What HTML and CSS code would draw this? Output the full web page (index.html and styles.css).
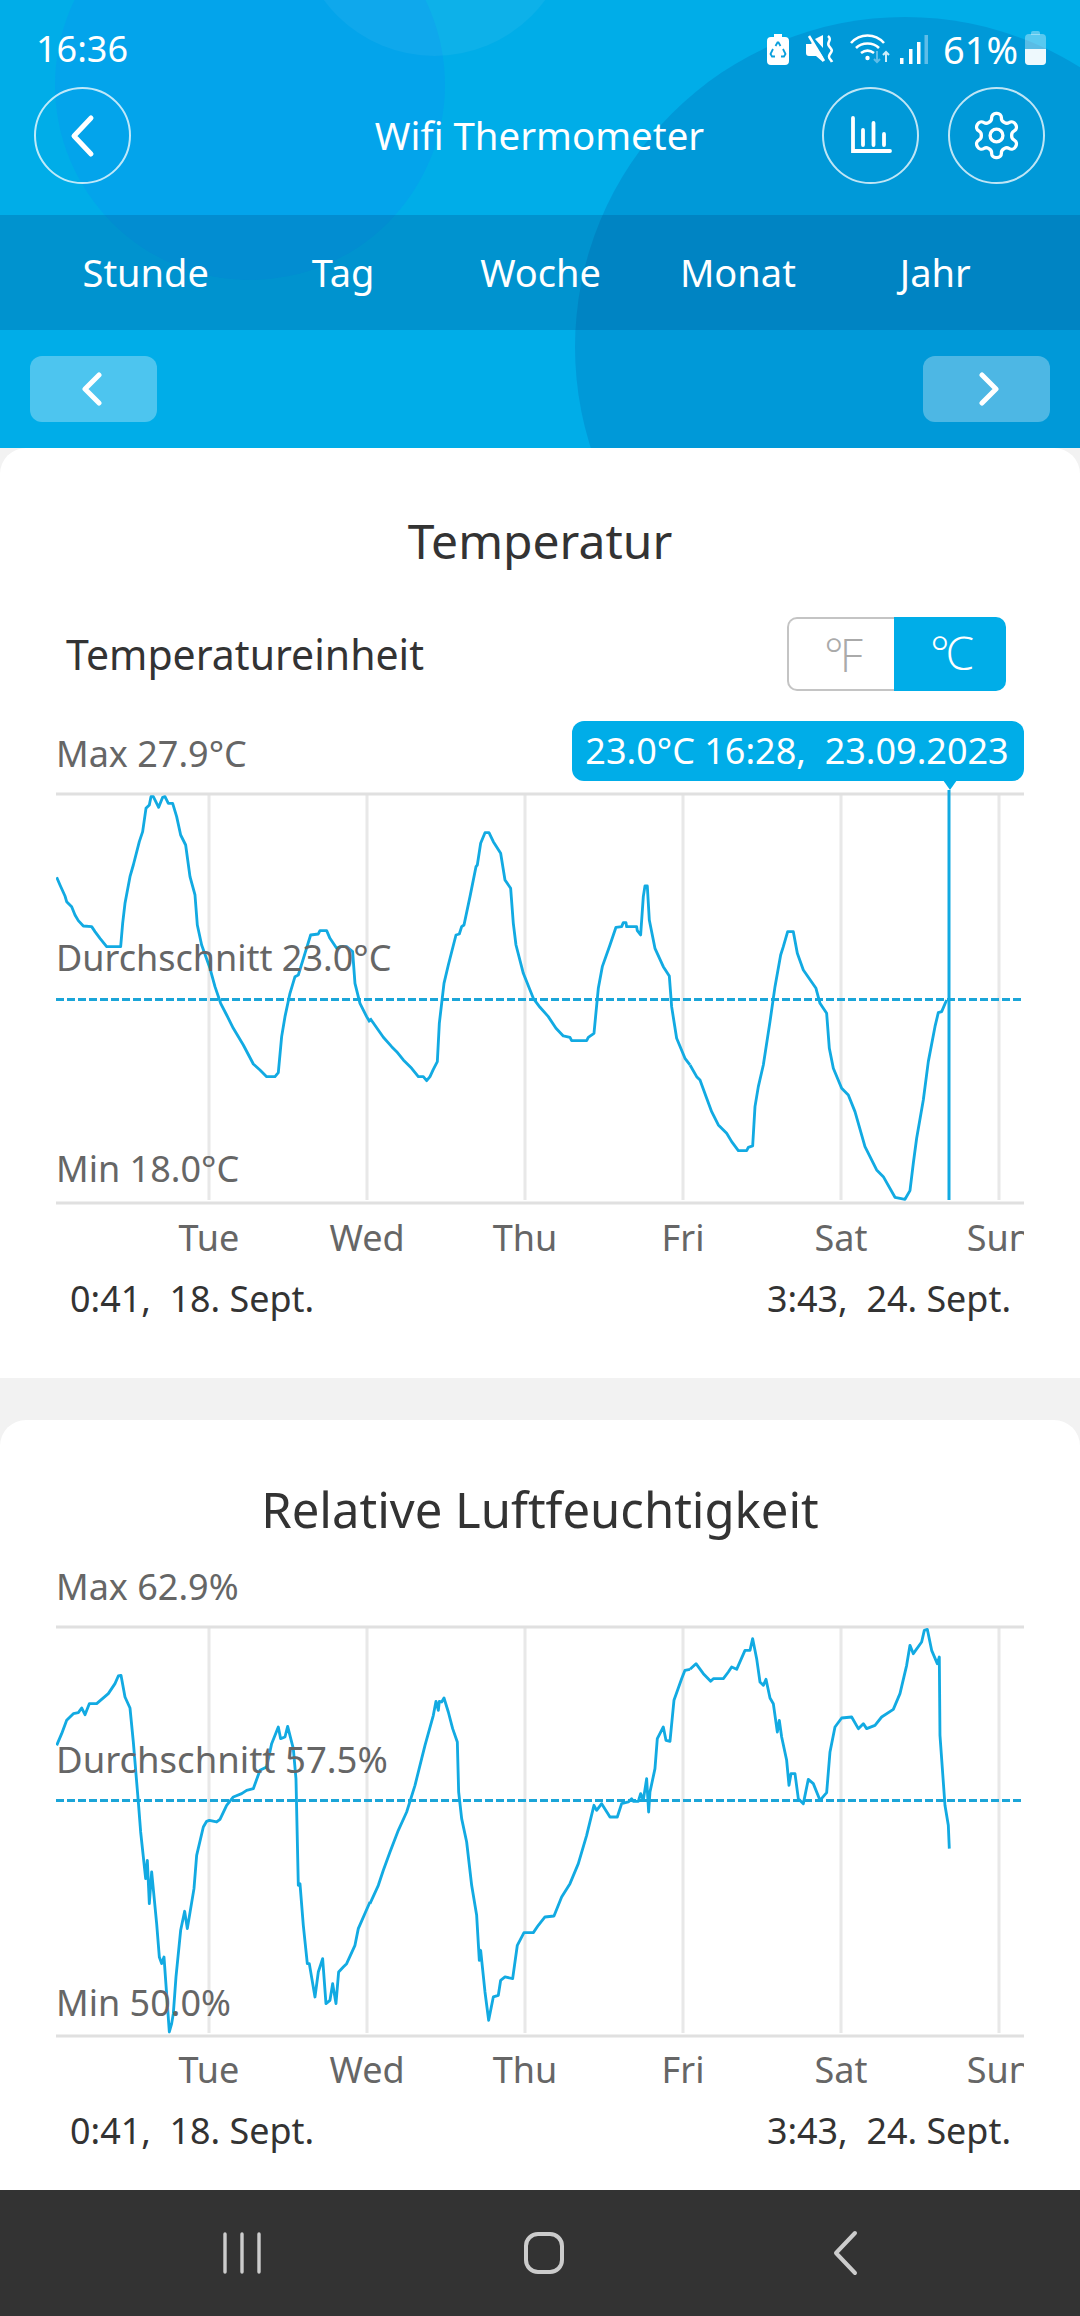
FILE: index.html
```html
<!DOCTYPE html>
<html lang="de">
<head>
    <meta charset="UTF-8">
    <meta name="viewport" content="width=device-width, initial-scale=1.0">
    <title>Wifi Thermometer</title>
    <link rel="stylesheet" href="styles.css">
</head>
<body>
<div class="top">
    <div class="blob blob-left"></div>
    <div class="blob blob-small"></div>
    <div class="blob blob-right"></div>

    <div class="status">
        <span class="time">16:36</span>
        <div class="status-icons">
            <svg class="ic-saver" width="22" height="31" viewBox="0 0 22 31">
                <path d="M7 0h8v3h3a4 4 0 0 1 4 4v20a4 4 0 0 1-4 4H4a4 4 0 0 1-4-4V7a4 4 0 0 1 4-4h3z" fill="#fff"/>
                <path d="M8.500 12l2-3.500h1l2 3.500M16 15l2.500 5-1.500 2.500h-3M8 22.500H5L3.500 20 6 15" fill="none" stroke="#0a9fdc" stroke-width="1.8"/>
            </svg>
            <svg class="ic-mute" width="29" height="28" viewBox="0 0 29 28">
                <path d="M0 9h5l2-2 10 15v5l-7-6H3a3 3 0 0 1-3-3zM9 4l8-4v13z" fill="#fff"/>
                <path d="M3 1l15 25" stroke="#fff" stroke-width="2.5"/>
                <path d="M22 1c5 4-2 6 1 10s4 4 1 8 1 5 2 8" fill="none" stroke="#fff" stroke-width="2.6"/>
            </svg>
            <svg class="ic-wifi" width="40" height="30" viewBox="0 0 40 30">
                <path d="M1 9c9-10 24-10 33 0M6 14c6-6 17-6 23 0M11 19c4-3 9-3 13 0" fill="none" stroke="#fff" stroke-width="2.6"/>
                <circle cx="17.500" cy="24" r="2.2" fill="#fff"/>
                <path d="M27 17v11M24 25l3 3 3-3" fill="none" stroke="#5fbde8" stroke-width="2"/>
                <path d="M36 28V18M33 21l3-3 3 3" fill="none" stroke="#cfeefa" stroke-width="2"/>
            </svg>
            <svg class="ic-signal" width="28" height="29" viewBox="0 0 28 29">
                <rect x="0" y="23" width="3.500" height="6" fill="#fff"/>
                <rect x="9" y="14" width="3.500" height="15" fill="#fff"/>
                <rect x="17" y="7" width="3.500" height="22" fill="#fff"/>
                <rect x="24.500" y="0" width="3.500" height="29" fill="#5fbde8"/>
            </svg>
            <span class="battery-text">61%</span>
            <div class="battery"><div class="battery-fill"></div></div>
        </div>
    </div>

    <div class="appbar">
        <div class="round-btn">
            <svg width="30" height="44" viewBox="0 0 30 44"><path d="M23 4L6 22l17 18" fill="none" stroke="#fff" stroke-width="5" stroke-linecap="round" stroke-linejoin="round"/></svg>
        </div>
        <div class="app-title">Wifi Thermometer</div>
        <div class="app-actions">
            <div class="round-btn">
                <svg width="42" height="40" viewBox="0 0 42 40">
                    <path d="M3 2v33h37M13 14v15M23.500 7v22M34 18v11" fill="none" stroke="#fff" stroke-width="3.800" stroke-linecap="round"/>
                </svg>
            </div>
            <div class="round-btn">
                <svg width="53" height="53" viewBox="0 0 24 24" fill="none" stroke="#fff" stroke-width="1.5" stroke-linejoin="round">
                    <path d="M12.220 2h-.44a2 2 0 0 0-2 2v.18a2 2 0 0 1-1 1.730l-.43.25a2 2 0 0 1-2 0l-.15-.08a2 2 0 0 0-2.730.73l-.22.38a2 2 0 0 0 .73 2.730l.15.1a2 2 0 0 1 1 1.720v.51a2 2 0 0 1-1 1.740l-.15.09a2 2 0 0 0-.73 2.730l.22.38a2 2 0 0 0 2.730.73l.15-.08a2 2 0 0 1 2 0l.43.25a2 2 0 0 1 1 1.730V20a2 2 0 0 0 2 2h.44a2 2 0 0 0 2-2v-.18a2 2 0 0 1 1-1.730l.43-.25a2 2 0 0 1 2 0l.15.08a2 2 0 0 0 2.730-.73l.22-.39a2 2 0 0 0-.73-2.730l-.15-.08a2 2 0 0 1-1-1.740v-.5a2 2 0 0 1 1-1.740l.15-.09a2 2 0 0 0 .73-2.730l-.22-.38a2 2 0 0 0-2.730-.73l-.15.08a2 2 0 0 1-2 0l-.43-.25a2 2 0 0 1-1-1.730V4a2 2 0 0 0-2-2z"/>
                    <circle cx="12" cy="12" r="2.900"/>
                </svg>
            </div>
        </div>
    </div>

    <div class="tabs">
        <span>Stunde</span>
        <span>Tag</span>
        <span>Woche</span>
        <span>Monat</span>
        <span>Jahr</span>
    </div>

    <div class="pager">
        <div class="page-btn">
            <svg width="24" height="34" viewBox="0 0 24 34"><path d="M17 3L3 17l14 14" fill="none" stroke="#fff" stroke-width="5" stroke-linecap="round" stroke-linejoin="round"/></svg>
        </div>
        <div class="page-btn">
            <svg width="24" height="34" viewBox="0 0 24 34"><path d="M7 3l14 14L7 31" fill="none" stroke="#fff" stroke-width="5" stroke-linecap="round" stroke-linejoin="round"/></svg>
        </div>
    </div>
</div>

<div class="card card-temp">
    <h2 class="card-title">Temperatur</h2>
    <div class="unit-row">
        <span class="unit-label">Temperatureinheit</span>
        <div class="unit-toggle">
            <span class="unit-off">°F</span>
            <span class="unit-on">°C</span>
        </div>
    </div>
    <div class="chart">
        <div class="chart-head">
            <span class="value-label">Max 27.9°C</span>
            <div class="tooltip">23.0°C 16:28,&nbsp; 23.09.2023</div>
        </div>
        <div class="plot">
            <svg class="plot-svg" width="968" height="416" viewBox="0 0 968 416">
                <g class="grid">
                    <path d="M153 5v405M311 5v405M469 5v405M627 5v405M785 5v405M943 5v405"/>
                </g>
                <path class="axis" d="M0 4h968M0 413h968"/>
                <path class="avg" d="M0 209.500h966"/>
                <polyline class="cross" points="893,0 893,410"/>
                <g class="curve">
                    <polyline transform="translate(-6 0) scale(.3333)" points="20,262 30,285 45,318 50,335 65,350 75,375 85,392 100,408 125,410 135,425 150,445 170,470 212,470 218,400 225,340 240,260 250,225 268,155 278,125 288,55 298,45 303,20 310,20 326,52 338,22 345,20 355,40 368,40 380,80 392,135 407,165 420,260 435,315 442,405 455,465 480,535 495,590 512,640 530,675 550,715 580,765 610,822 630,840 650,860 675,860 685,848 695,740 705,680 720,610 735,560 745,555 765,490 782,435 805,432 810,422 830,422 840,445 860,475 870,470 890,470 908,485 915,580 930,640 950,680 960,697"/>
                    <polyline transform="translate(314 0) scale(.3333)" points="0,685 40,742 65,770 80,785 100,810 125,835 145,860 160,860 170,872 180,860 190,838 202,815 208,700 222,580 235,525 258,435 268,432 275,410 282,405 300,320 318,230 322,225 332,160 345,128 357,128 370,155 392,190 405,270 422,295 430,400 438,465 460,550 490,625 510,652 535,680 558,715 580,738 600,742 605,752 650,752 655,742 672,730 685,595 697,530 720,465 738,412 755,410 760,398 768,398 770,410 800,410 802,422 812,435 820,320 825,288 832,288 838,390 855,475 880,530 898,558 905,650 920,745 945,805 960,825"/>
                    <polyline transform="translate(634 0) scale(.3333)" points="0,825 20,860 30,870 50,925 65,965 85,1005 110,1030 125,1055 145,1082 170,1082 175,1072 188,1068 195,950 205,890 220,825 240,695 255,590 272,495 280,470 293,425 310,425 322,490 340,540 378,595 390,640 410,670 418,775 430,835 455,895 475,915 495,965 525,1070 560,1140 580,1160 615,1222 645,1228 660,1202 670,1120 680,1045 700,930 715,815 735,710 745,668 755,665 770,630"/>
                </g>
            </svg>
            <span class="value-label plot-avg">Durchschnitt 23.0°C</span>
            <span class="value-label plot-min">Min 18.0°C</span>
        </div>
        <div class="days">
            <span>Tue</span><span>Wed</span><span>Thu</span><span>Fri</span><span>Sat</span><span>Sun</span>
        </div>
        <div class="range">
            <span>0:41,&nbsp; 18. Sept.</span>
            <span>3:43,&nbsp; 24. Sept.</span>
        </div>
    </div>
</div>

<div class="card card-hum">
    <h2 class="card-title">Relative Luftfeuchtigkeit</h2>
    <div class="chart">
        <div class="chart-head">
            <span class="value-label">Max 62.9%</span>
        </div>
        <div class="plot">
            <svg class="plot-svg" width="968" height="416" viewBox="0 0 968 416">
                <g class="grid">
                    <path d="M153 6v405M311 6v405M469 6v405M627 6v405M785 6v405M943 6v405"/>
                </g>
                <path class="axis" d="M0 5h968M0 414h968"/>
                <path class="avg" d="M0 178.500h966"/>
                <g class="curve">
                    <polyline transform="translate(-6 0) scale(.3333)" points="20,370 35,335 50,295 60,285 70,275 85,272 95,258 105,278 118,245 140,245 175,215 195,185 205,162 213,160 225,225 240,258 250,360 265,540 272,630 287,770 292,715 298,845 305,750 320,905 328,1005 335,1025 342,1005 358,1230 365,1205 370,1175 378,1065 392,925 404,868 412,920 432,800 440,700 460,615 470,598 478,595 500,600 510,592 530,550 550,525 575,515 590,505 610,500 630,445 650,435 665,365 685,315 692,350 705,345 713,313 730,380 738,470 745,790 750,785 760,910 772,1025 778,1025 795,1125 805,1050 818,1010 828,1145 840,1135 848,1085 858,1145 866,1050 880,1035 890,1025 915,970 925,920 960,840"/>
                    <polyline transform="translate(314 0) scale(.3333)" points="0,845 25,790 40,745 60,690 85,625 110,570 135,490 155,410 165,370 190,280 198,238 205,265 208,238 215,240 222,228 235,270 248,320 262,360 266,510 275,590 290,660 305,790 320,880 328,1015 332,985 345,1110 356,1195 370,1125 385,1120 392,1075 405,1065 428,1070 442,970 462,932 490,932 505,910 525,885 552,882 575,825 600,785 625,725 650,640 672,550 680,565 695,545 720,585 742,585 755,545 775,540 785,530 790,538 805,538 812,515 820,535 830,470 836,570 840,510 855,440 862,350 880,315 888,355 900,358 912,235 935,170 945,145 960,142"/>
                    <polyline transform="translate(634 0) scale(.3333)" points="0,142 18,125 40,155 62,178 70,170 100,170 115,150 125,135 140,142 165,85 180,85 188,50 200,110 210,180 220,190 228,172 240,228 250,245 262,330 268,295 275,345 290,415 297,490 303,455 315,455 325,530 340,545 355,472 370,485 390,535 410,512 420,390 435,315 455,288 485,285 505,320 520,305 530,320 555,310 575,285 610,262 630,215 650,130 660,70 670,95 695,60 703,25 712,22 725,85 742,125 748,105 750,340 765,550 775,610 778,680"/>
                </g>
            </svg>
            <span class="value-label plot-avg">Durchschnitt 57.5%</span>
            <span class="value-label plot-min">Min 50.0%</span>
        </div>
        <div class="days">
            <span>Tue</span><span>Wed</span><span>Thu</span><span>Fri</span><span>Sat</span><span>Sun</span>
        </div>
        <div class="range">
            <span>0:41,&nbsp; 18. Sept.</span>
            <span>3:43,&nbsp; 24. Sept.</span>
        </div>
    </div>
</div>

<div class="navbar">
    <svg width="40" height="44" viewBox="0 0 40 44"><path d="M3 3v38M20 3v38M37 3v38" stroke="#ccc" stroke-width="3.400" stroke-linecap="round"/></svg>
    <svg width="44" height="44" viewBox="0 0 44 44"><rect x="4" y="3" width="36" height="38" rx="12" fill="none" stroke="#ccc" stroke-width="4"/></svg>
    <svg width="30" height="46" viewBox="0 0 30 46"><path d="M24 3L5 23l19 20" fill="none" stroke="#ccc" stroke-width="4" stroke-linecap="round" stroke-linejoin="round"/></svg>
</div>
</body>
</html>
```

FILE: styles.css
```css
* { box-sizing: border-box; }
html, body { margin: 0; padding: 0; }
body { width: 1080px; height: 2316px; overflow: hidden; background: #f2f2f2; font-family: "Noto Sans", Arial, sans-serif; display: flex; flex-direction: column; }

.top { position: relative; height: 448px; overflow: hidden; background: #00ade8; color: #fff; flex: none; }
.blob { position: absolute; border-radius: 50%; }
.blob-left { left: 55px; top: -110px; width: 390px; height: 390px; background: #03a4eb; }
.blob-small { left: 297px; top: -219px; width: 275px; height: 275px; background: rgba(255, 255, 255, .05); }
.blob-right { left: 575px; top: 17px; width: 660px; height: 660px; background: #0099d8; }

.status { position: relative; height: 87px; padding: 28px 34px 0 36px; display: flex; justify-content: space-between; align-items: flex-start; }
.time { font-size: 36px; line-height: 42px; }
.status-icons { display: flex; align-items: center; height: 42px; }
.ic-mute { margin-left: 17px; }
.ic-wifi { margin-left: 15px; }
.ic-signal { margin-left: 10px; }
.battery-text { font-size: 38px; line-height: 42px; margin-left: 15px; }
.battery { position: relative; width: 21px; height: 31px; margin-left: 7px; border-radius: 4px; background: rgba(255, 255, 255, .35); }
.battery::before { content: ""; position: absolute; left: 6px; top: -3px; width: 9px; height: 4px; background: rgba(255, 255, 255, .35); border-radius: 2px 2px 0 0; }
.battery-fill { position: absolute; left: 0; right: 0; bottom: 0; height: 16px; background: #eef9fd; border-radius: 0 0 4px 4px; }

.appbar { position: relative; height: 97px; padding: 0 35px 0 34px; display: grid; grid-template-columns: 1fr auto 1fr; align-items: center; }
.round-btn { width: 97px; height: 97px; border: 2px solid rgba(255, 255, 255, .75); border-radius: 50%; display: flex; align-items: center; justify-content: center; }
.app-title { font-size: 38.4px; line-height: 50px; margin-top: -1px; }
.app-actions { display: flex; justify-content: flex-end; gap: 29px; }

.tabs { position: relative; margin-top: 31px; height: 115px; padding: 0 46px 1px 47px; background: rgba(0, 70, 130, .25); display: grid; grid-template-columns: repeat(5, 1fr); align-items: center; text-align: center; font-size: 38px; }

.pager { position: relative; padding: 26px 30px 0; display: flex; justify-content: space-between; }
.page-btn { width: 127px; height: 66px; border-radius: 12px; background: rgba(255, 255, 255, .3); display: flex; align-items: center; justify-content: center; }

.card { background: #fff; border-radius: 26px 26px 0 0; flex: none; }
.card-temp { height: 930px; }
.card-hum { height: 770px; margin-top: 42px; }
.card-title { margin: 0; font-weight: 400; font-size: 48px; line-height: 64px; color: #333; text-align: center; }
.card-temp .card-title { padding-top: 61px; height: 126px; }
.card-hum .card-title { padding-top: 57px; height: 122px; font-size: 49px; }

.unit-row { display: flex; justify-content: space-between; align-items: center; height: 74px; margin-top: 43px; padding: 0 74px 0 66px; }
.unit-label { font-size: 41px; color: #333; }
.unit-toggle { display: flex; width: 219px; height: 74px; font-family: "Open Sans", "Noto Sans", sans-serif; font-weight: 300; font-size: 46px; line-height: 70px; letter-spacing: -4px; text-align: center; }
.unit-off { width: 107px; border: 2px solid #c4c4c4; border-right: 0; border-radius: 10px 0 0 10px; color: #aaa; }
.unit-on { width: 112px; background: #00ade8; color: #fff; border-radius: 0 10px 10px 0; }

.chart { padding: 0 56px; }
.chart-head { position: relative; height: 99px; }
.card-hum .chart-head { height: 80px; }
.value-label { font-size: 36px; line-height: 48px; color: #666; white-space: nowrap; }
.chart-head .value-label { position: absolute; left: 0; top: 39px; }
.card-hum .chart-head .value-label { top: 21px; }
.tooltip { position: absolute; right: 0; top: 30px; width: 452px; height: 60px; padding-right: 2px; background: #00ade8; color: #fff; border-radius: 12px; font-size: 36px; line-height: 60px; text-align: center; white-space: nowrap; }
.tooltip::after { content: ""; position: absolute; left: 371px; top: 59px; border: 7px solid transparent; border-top: 10px solid #00ade8; border-bottom: 0; }

.plot { position: relative; height: 416px; }
.plot-svg { display: block; }
.grid path { stroke: #e8e8e8; stroke-width: 3; fill: none; }
.axis { stroke: #e0e0e0; stroke-width: 3; fill: none; }
.avg { stroke: #1ba5d8; stroke-width: 3; stroke-dasharray: 8 3; fill: none; }
.cross { stroke: #12aae2; stroke-width: 3; fill: none; }
.curve polyline { fill: none; stroke: #12aae2; stroke-width: 8.5; stroke-linejoin: round; }
.plot-avg, .plot-min { position: absolute; left: 0; }
.card-temp .plot-avg { top: 144px; }
.card-temp .plot-min { top: 355px; }
.card-hum .plot-avg { top: 113px; }
.card-hum .plot-min { top: 357px; }
.card-hum .plot-avg { font-size: 36.5px; }

.days { display: grid; grid-template-columns: repeat(6, 158px); padding-left: 74px; overflow: hidden; height: 48px; margin-top: 8px; font-size: 36px; line-height: 48px; color: #666; text-align: center; white-space: nowrap; }
.range { display: flex; justify-content: space-between; padding: 0 13px 0 14px; margin-top: 13px; font-size: 35.9px; line-height: 48px; color: #333; }

.navbar { flex: none; height: 126px; background: #333; display: grid; grid-template-columns: repeat(3, 302px); padding-left: 91px; justify-items: center; align-items: center; }
```
